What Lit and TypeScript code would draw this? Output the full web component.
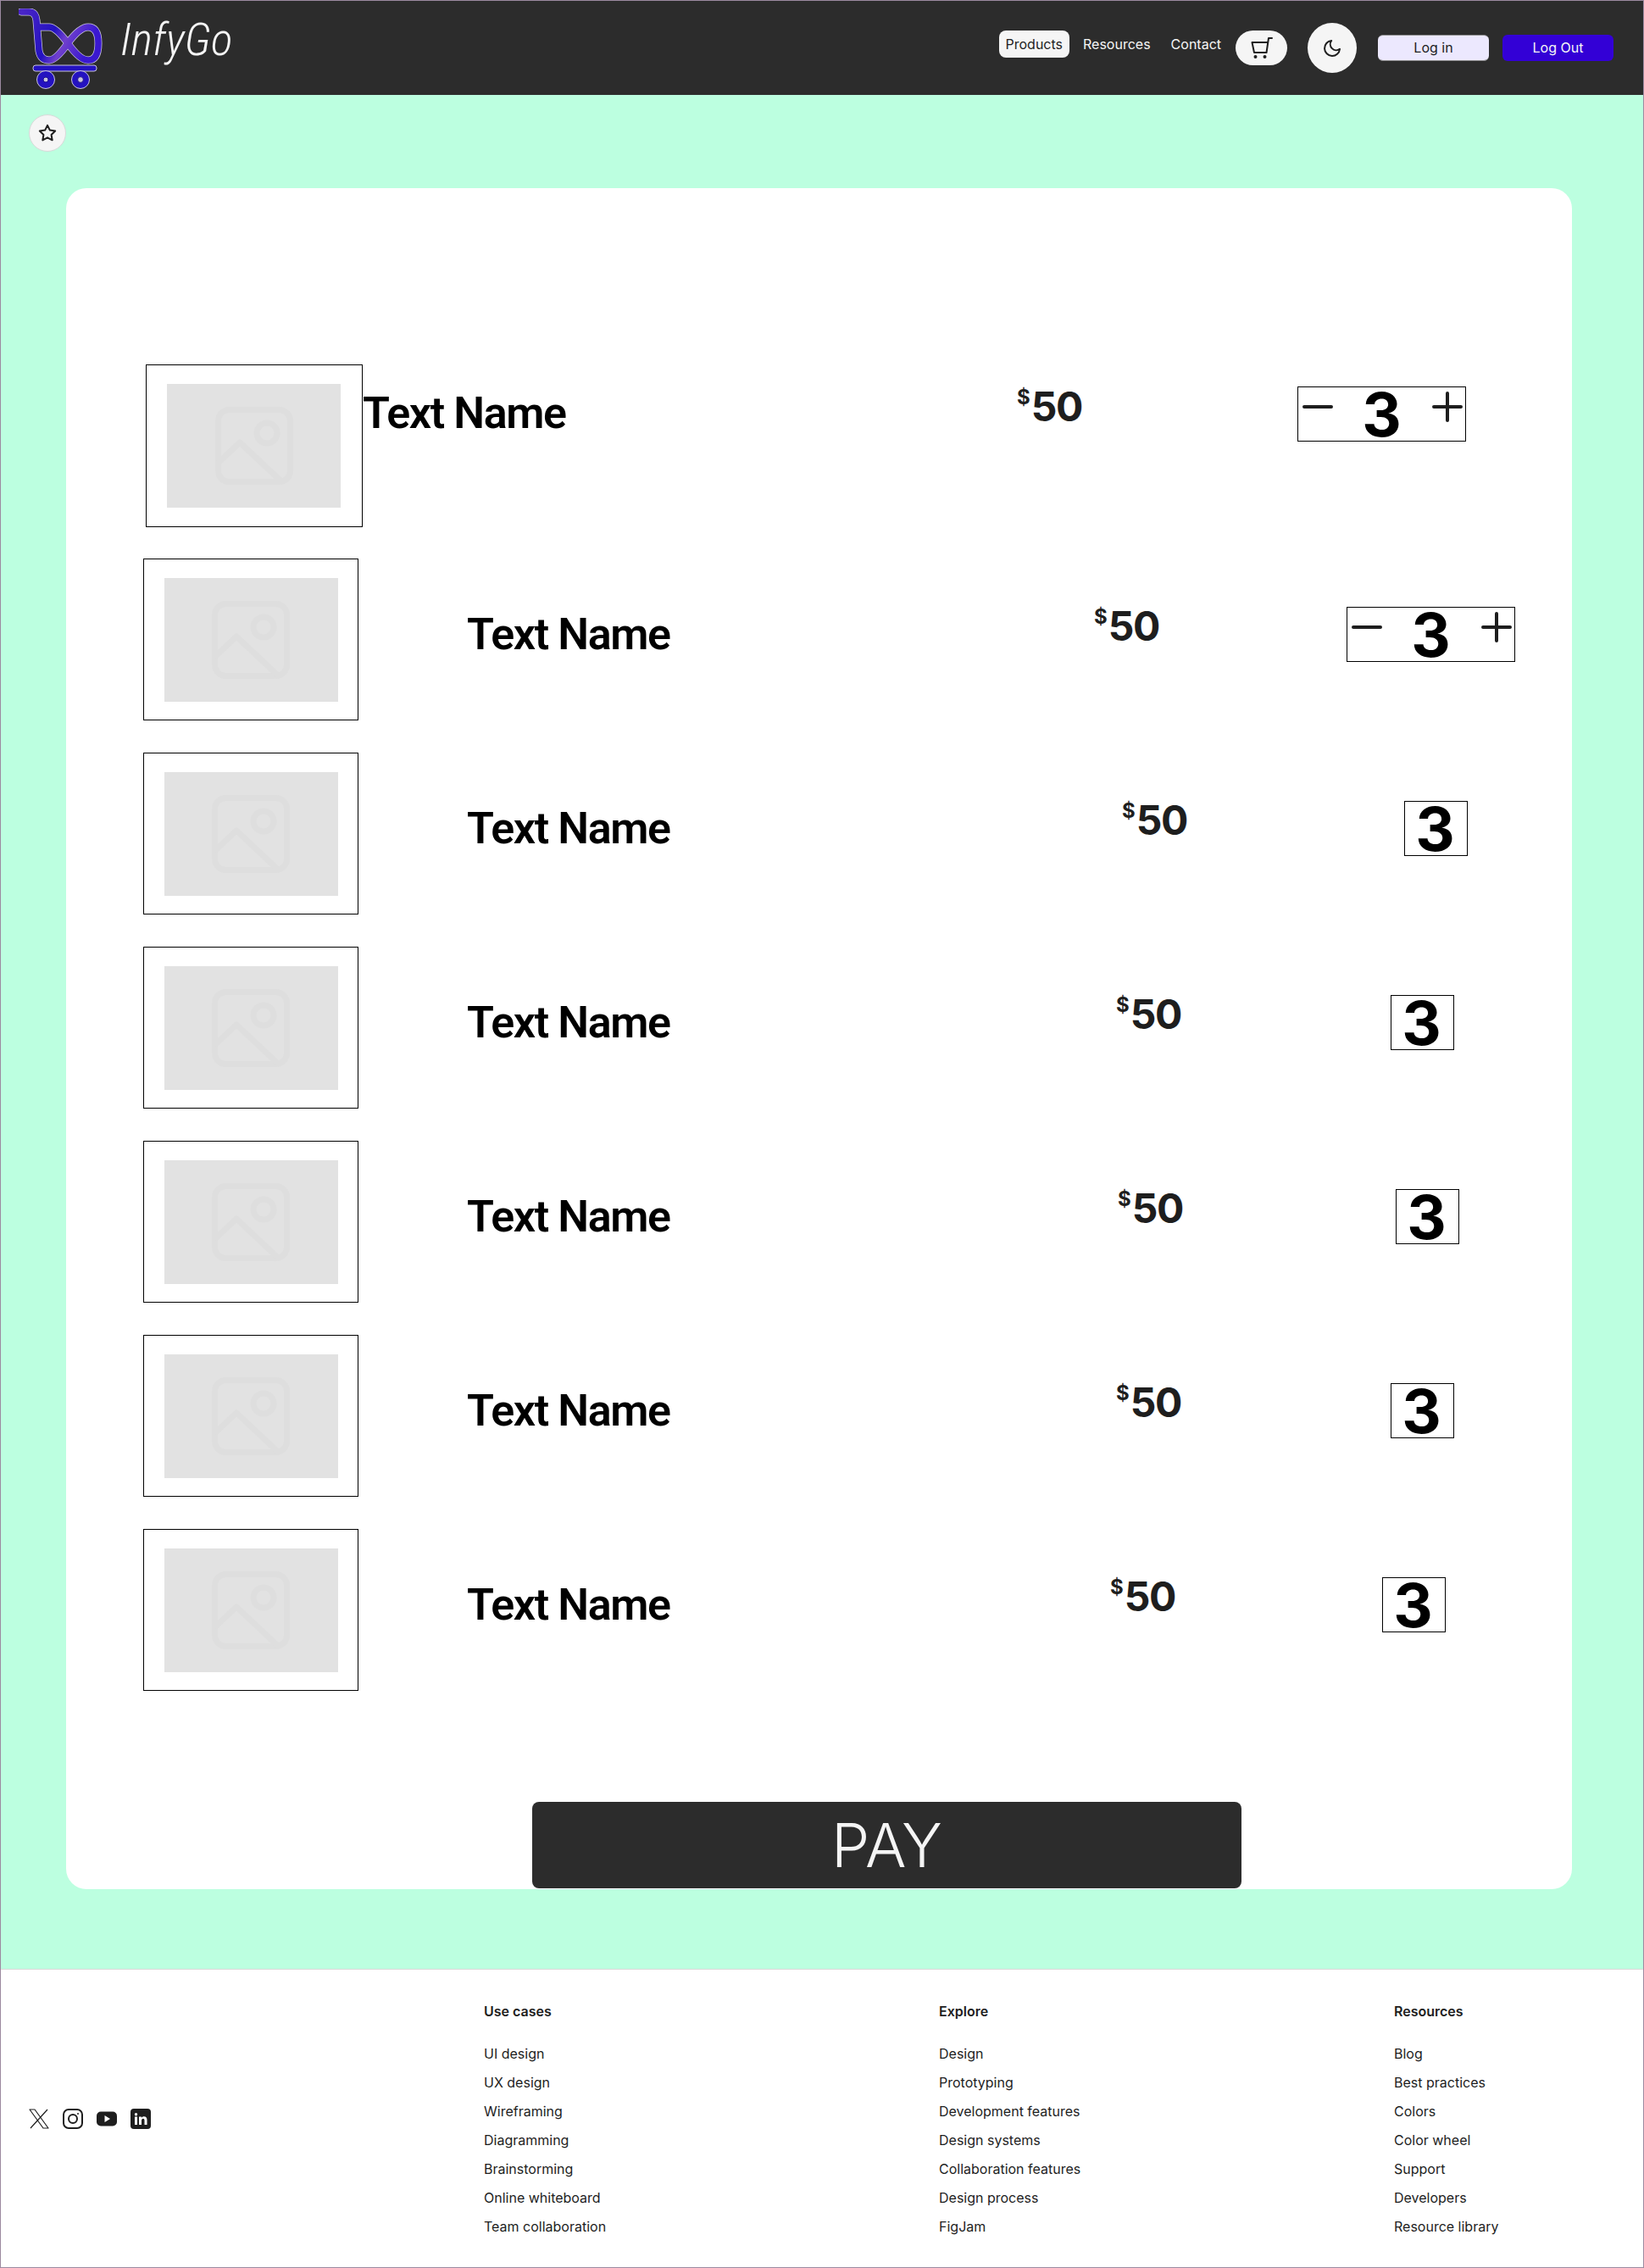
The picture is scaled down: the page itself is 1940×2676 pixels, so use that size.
import { LitElement, html, css, svg } from 'lit';
import { customElement } from 'lit/decorators.js';

// x positions measured per row, the rows are not aligned with each other
const ROWS = [
  { box: 172, name: 428, price: 1200, qty: 1531, qtyW: 199, stepper: true, first: true },
  { box: 169, name: 551, price: 1291, qty: 1589, qtyW: 199, stepper: true, first: false },
  { box: 169, name: 551, price: 1324, qty: 1657, qtyW: 75, stepper: false, first: false },
  { box: 169, name: 551, price: 1317, qty: 1641, qtyW: 75, stepper: false, first: false },
  { box: 169, name: 551, price: 1319, qty: 1647, qtyW: 75, stepper: false, first: false },
  { box: 169, name: 551, price: 1317, qty: 1641, qtyW: 75, stepper: false, first: false },
  { box: 169, name: 551, price: 1310, qty: 1631, qtyW: 75, stepper: false, first: false },
];

const FOOTER = [
  { title: 'Use cases', links: ['UI design', 'UX design', 'Wireframing', 'Diagramming', 'Brainstorming', 'Online whiteboard', 'Team collaboration'] },
  { title: 'Explore', links: ['Design', 'Prototyping', 'Development features', 'Design systems', 'Collaboration features', 'Design process', 'FigJam'] },
  { title: 'Resources', links: ['Blog', 'Best practices', 'Colors', 'Color wheel', 'Support', 'Developers', 'Resource library'] },
];

const CARD_LEFT = 78;
const PRICE_W = 76;
const LOGO_PATH = 'M3 4 H12 Q20 4 21 14 L24 50 Q26 61 36 61 Q44 61 58 41 Q72 22 82 22 Q94 22 94 41 Q94 61 82 61 Q72 61 58 41 Q44 22 36 22 L22 22';

const logo = svg`
  <svg width="100" height="100" viewBox="0 0 100 100" fill="none">
    <defs>
      <linearGradient id="lg" x1="0" y1="0" x2="1" y2="0.3">
        <stop offset="0" stop-color="#4a25c8"></stop>
        <stop offset="0.5" stop-color="#2412c0"></stop>
        <stop offset="0.68" stop-color="#7040cc"></stop>
        <stop offset="1" stop-color="#3a18d0"></stop>
      </linearGradient>
    </defs>
    <path d=${LOGO_PATH} stroke="#c9c5dc" stroke-width="9" stroke-linecap="round" stroke-linejoin="round"></path>
    <path d=${LOGO_PATH} stroke="url(#lg)" stroke-width="7.5" stroke-linecap="round" stroke-linejoin="round"></path>
    <rect x="17" y="67" width="75" height="7" rx="3" fill="#2412c0" stroke="#c9c5dc"></rect>
    <circle cx="32" cy="84" r="10.5" fill="#2412c0" stroke="#c9c5dc"></circle>
    <circle cx="32" cy="84" r="3" fill="#c9c5dc" stroke="#1a0f90"></circle>
    <circle cx="73" cy="84" r="10.5" fill="#2412c0" stroke="#c9c5dc"></circle>
    <circle cx="73" cy="84" r="3.4" fill="#c9c5dc" stroke="#1a0f90"></circle>
  </svg>`;

const placeholder = svg`
  <svg width="92" height="92" viewBox="0 0 92 92" fill="none" stroke="#dedede" stroke-width="7" stroke-linejoin="round">
    <rect x="3.5" y="3.5" width="85" height="85" rx="13"></rect>
    <circle cx="61" cy="31" r="12"></circle>
    <path d="M3.500 66 L29 42 L78 88"></path>
  </svg>`;

@customElement('app-root')
export class AppRoot extends LitElement {
  static styles = css`
    :host { display: block; font-family: Inter, sans-serif; color: #1e1e1e; }
    .page { width: 1940px; height: 2676px; box-sizing: border-box; border: 1px solid #9c8aa0; display: flex; flex-direction: column; overflow: hidden; background: #fff; }

    .header { height: 111px; flex: none; background: #2c2c2c; display: flex; align-items: flex-start; padding-right: 35px; }
    .logo { margin: 9px 0 0 21px; width: 100px; height: 100px; }
    .brand { margin: 14px 0 0 20px; font: italic 300 54px/64px Roboto, sans-serif; font-stretch: 80%; color: #f5f5f5; }
    .nav { margin-left: auto; margin-top: 35px; display: flex; gap: 8px; }
    .nav a { height: 32px; padding: 0 8px; border-radius: 8px; font-size: 16px; line-height: 32px; color: #f5f5f5; }
    .nav a.on { background: #f5f5f5; color: #1e1e1e; }
    .cart { margin: 35px 0 0 9px; width: 61px; height: 41px; border-radius: 21px; background: #f5f5f5; display: flex; align-items: center; justify-content: center; }
    .moon { margin: 26px 0 0 24px; width: 58px; height: 59px; border-radius: 50%; background: #f5f5f5; display: flex; align-items: center; justify-content: center; }
    .btn { margin-top: 40px; width: 131px; height: 31px; border-radius: 6px; font-size: 16px; line-height: 31px; text-align: center; }
    .login { margin-left: 25px; background: #ece8fe; color: #1e1e1e; border: 1px solid #8a8a8a; border-width: 1px 0; box-sizing: border-box; line-height: 29px; }
    .logout { margin-left: 16px; background: #3300d6; color: #f5f5f5; }

    .main { flex: 1; background: #bcffe0; padding-top: 23px; }
    .star { margin-left: 33px; width: 44px; height: 44px; box-sizing: border-box; border-radius: 50%; background: #f5f5f5; border: 1px solid #d9d9d9; display: flex; align-items: center; justify-content: center; }
    .card { margin: 43px 0 0 77px; width: 1777px; height: 2007px; box-sizing: border-box; padding-top: 178px; border-radius: 24px; background: #fff; }
    .rows { display: flex; flex-direction: column; gap: 38px; }
    .row { display: flex; align-items: flex-start; height: 191px; }
    .row.first { height: 221px; }
    .box { flex: none; width: 254px; height: 191px; box-sizing: border-box; border: 1px solid #000; padding-top: 22px; display: flex; justify-content: center; }
    .first .box { width: 256px; height: 192px; margin-top: 30px; padding-right: 1px; }
    .thumb { width: 205px; height: 146px; background: #e2e2e2; display: flex; align-items: center; justify-content: center; }
    .name { flex: none; width: 300px; margin-top: 59px; font-family: Roboto, sans-serif; font-size: 52px; font-weight: 600; line-height: 62px; letter-spacing: -1.4px; color: #000; white-space: nowrap; }
    .first .name { margin-top: 57px; }
    .price { flex: none; width: ${PRICE_W}px; margin-top: 51px; display: flex; align-items: flex-start; color: #1e1e1e; font-weight: 700; font-size: 48px; line-height: 58px; letter-spacing: -1.5px; white-space: nowrap; }
    .price small { font-size: 24px; line-height: 30px; margin: 3px 1px 0 0; letter-spacing: 0; }
    .qty { flex: none; height: 65px; margin-top: 57px; box-sizing: border-box; border: 1px solid #000; display: flex; align-items: center; justify-content: center; position: relative; font-size: 72px; font-weight: 700; line-height: 65px; color: #000; }
    .qty.plain { padding-right: 2px; }
    .first .qty { margin-top: 56px; }
    .step { position: absolute; top: 5px; width: 36px; height: 36px; }
    .step.minus { left: 5px; }
    .step.plus { right: 3px; }

    .pay { margin: 131px 0 0 550px; width: 837px; height: 102px; border-radius: 8px; background: #2c2c2c; color: #f5f5f5; font-size: 72px; font-weight: 300; line-height: 102px; text-align: center; }

    .footer { flex: none; height: 352px; box-sizing: border-box; border-top: 1px solid #d9d9d9; background: #fff; display: flex; align-items: flex-start; }
    .social { flex: none; width: 537px; margin-left: 33px; height: 100%; display: flex; align-items: center; gap: 16px; }
    .social svg { display: block; }
    .col { width: 537px; flex: none; padding-top: 38px; display: flex; flex-direction: column; gap: 12px; font-size: 16px; line-height: 22px; color: #1e1e1e; }
    .col b { font-weight: 600; margin-bottom: 16px; }
  `;

  render() {
    return html`
      <div class="page">
        <div class="header">
          <div class="logo">${logo}</div>
          <div class="brand">InfyGo</div>
          <div class="nav">
            <a class="on">Products</a>
            <a>Resources</a>
            <a>Contact</a>
          </div>
          <div class="cart">
            <svg width="26" height="26" viewBox="0 0 26 26" fill="none" stroke="#1e1e1e" stroke-width="2" stroke-linecap="round" stroke-linejoin="round">
              <path d="M25 1 H21 L18.500 18 H4 L1.500 6 H20"></path>
              <circle cx="5.500" cy="23" r="1" fill="#1e1e1e"></circle>
              <circle cx="16.500" cy="23" r="1" fill="#1e1e1e"></circle>
            </svg>
          </div>
          <div class="moon">
            <svg width="24" height="24" viewBox="0 0 24 24" fill="none" stroke="#1e1e1e" stroke-width="2" stroke-linecap="round" stroke-linejoin="round">
              <path d="M21 12.800A9 9 0 1 1 11.200 3a7 7 0 0 0 9.800 9.800z"></path>
            </svg>
          </div>
          <div class="btn login">Log in</div>
          <div class="btn logout">Log Out</div>
        </div>
        <div class="main">
          <div class="star">
            <svg width="22" height="22" viewBox="0 0 24 24" fill="none" stroke="#1e1e1e" stroke-width="2.200" stroke-linejoin="round">
              <path d="M12 2l3.100 6.300 6.900 1-5 4.900 1.200 6.900L12 17.800l-6.200 3.300L7 14.200 2 9.300l6.900-1z"></path>
            </svg>
          </div>
          <div class="card">
            <div class="rows">${ROWS.map((r) => this.renderRow(r))}</div>
            <div class="pay">PAY</div>
          </div>
        </div>
        <div class="footer">
          <div class="social">
            ${this.renderSocial()}
          </div>
          ${FOOTER.map((c) => html`
            <div class="col">
              <b>${c.title}</b>
              ${c.links.map((l) => html`<span>${l}</span>`)}
            </div>`)}
        </div>
      </div>
    `;
  }

  renderRow(r: (typeof ROWS)[number]) {
    const boxW = r.first ? 256 : 254;
    return html`
      <div class="row ${r.first ? 'first' : ''}" style="margin-left:${r.box - CARD_LEFT}px">
        <div class="box"><div class="thumb">${placeholder}</div></div>
        <div class="name" style="margin-left:${r.name - r.box - boxW}px">Text Name</div>
        <div class="price" style="margin-left:${r.price - r.name - 300}px"><small>$</small>50</div>
        <div class="qty ${r.stepper ? '' : 'plain'}" style="margin-left:${r.qty - r.price - PRICE_W}px;width:${r.qtyW}px">
          ${r.stepper ? html`
            <svg class="step minus" viewBox="0 0 36 36" stroke="#1e1e1e" stroke-width="4" stroke-linecap="round"><path d="M2 18H34"></path></svg>
            <svg class="step plus" viewBox="0 0 36 36" stroke="#1e1e1e" stroke-width="4" stroke-linecap="round"><path d="M2 18H34M18 2V34"></path></svg>` : ''}
          3
        </div>
      </div>`;
  }

  renderSocial() {
    return html`
      <svg width="24" height="24" viewBox="0 0 24 24" fill="none" stroke="#1e1e1e" stroke-width="1.200"><path d="M1 1h6l16 22h-6zM22 1L2 23" stroke-linejoin="round"></path></svg>
      <svg width="24" height="24" viewBox="0 0 24 24" fill="none" stroke="#1e1e1e" stroke-width="2"><rect x="1" y="1" width="22" height="22" rx="6"></rect><circle cx="12" cy="12" r="5"></circle><circle cx="18" cy="6" r="1" fill="#1e1e1e" stroke="none"></circle></svg>
      <svg width="24" height="24" viewBox="0 0 24 24"><rect y="3.500" width="24" height="17" rx="5" fill="#1e1e1e"></rect><path d="M9.500 8l6.500 4-6.500 4z" fill="#fff"></path></svg>
      <svg width="24" height="24" viewBox="0 0 24 24"><rect width="24" height="24" rx="4" fill="#1e1e1e"></rect><path d="M5 9.500h3V19H5zM6.500 5a1.700 1.700 0 1 1 0 3.400 1.700 1.700 0 0 1 0-3.400zM10 9.500h2.900v1.300c.5-.9 1.600-1.600 3-1.600 2.800 0 3.600 1.800 3.600 4.400V19h-3v-4.800c0-1.300-.3-2.400-1.600-2.400s-1.900 1-1.900 2.400V19h-3z" fill="#fff"></path></svg>`;
  }
}
